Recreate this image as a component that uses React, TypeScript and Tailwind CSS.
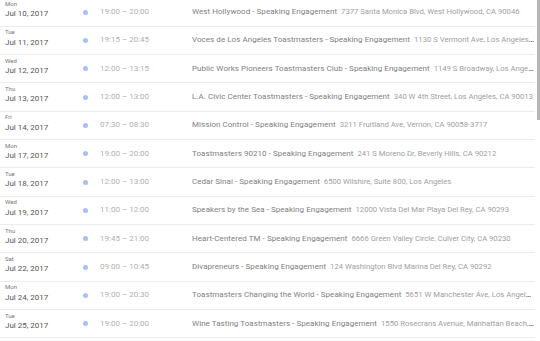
import React from "react";

const rows = [
  ["Mon", "Jul 10, 2017", "19:00 – 20:00", "West Hollywood - Speaking Engagement", "7377 Santa Monica Blvd, West Hollywood, CA 90046"],
  ["Tue", "Jul 11, 2017", "19:15 – 20:45", "Voces de Los Angeles Toastmasters - Speaking Engagement", "1130 S Vermont Ave, Los Angeles, CA 90006"],
  ["Wed", "Jul 12, 2017", "12:00 – 13:15", "Public Works Pioneers Toastmasters Club - Speaking Engagement", "1149 S Broadway, Los Angeles, CA 90015"],
  ["Thu", "Jul 13, 2017", "12:00 – 13:00", "L.A. Civic Center Toastmasters - Speaking Engagement", "340 W 4th Street, Los Angeles, CA 90013"],
  ["Fri", "Jul 14, 2017", "07:30 – 08:30", "Mission Control - Speaking Engagement", "3211 Fruitland Ave, Vernon, CA 90058-3717"],
  ["Mon", "Jul 17, 2017", "19:00 – 20:00", "Toastmasters 90210 - Speaking Engagement", "241 S Moreno Dr, Beverly Hills, CA 90212"],
  ["Tue", "Jul 18, 2017", "12:00 – 13:00", "Cedar Sinai - Speaking Engagement", "6500 Wilshire, Suite 800, Los Angeles"],
  ["Wed", "Jul 19, 2017", "11:00 – 12:00", "Speakers by the Sea - Speaking Engagement", "12000 Vista Del Mar Playa Del Rey, CA 90293"],
  ["Thu", "Jul 20, 2017", "19:45 – 21:00", "Heart-Centered TM - Speaking Engagement", "6666 Green Valley Circle, Culver City, CA 90230"],
  ["Sat", "Jul 22, 2017", "09:00 – 10:45", "Divapreneurs - Speaking Engagement", "124 Washington Blvd Marina Del Rey, CA 90292"],
  ["Mon", "Jul 24, 2017", "19:00 – 20:30", "Toastmasters Changing the World - Speaking Engagement", "5651 W Manchester Ave, Los Angeles, CA 90045"],
  ["Tue", "Jul 25, 2017", "19:00 – 20:00", "Wine Tasting Toastmasters - Speaking Engagement", "1550 Rosecrans Avenue, Manhattan Beach, CA 90266"],
];

export default function App() {
  return (
    <div
      className="relative w-[540px] h-[341px] overflow-hidden bg-white"
      style={{ fontFamily: "Roboto, 'Liberation Sans', sans-serif" }}
    >
      <div className="mt-[-1.6px] w-[535px]">
        {rows.map(([day, date, time, title, addr], i) => (
          <div key={i} className="flex h-[28.33px] items-center border-b border-[#ebebeb]">
            <div className="flex w-[83px] shrink-0 flex-col self-start pl-[5px] pt-[1.5px]">
              <div className="text-[6px] leading-[7px] text-[#777]">{day}</div>
              <div className="mt-[2.5px] text-[8px] leading-[10px] text-[#555]">{date}</div>
            </div>
            <div className="h-[5px] w-[5px] shrink-0 rounded-full bg-[#a8c0f5]" />
            <div className="ml-[12px] w-[92px] shrink-0 text-[8px] leading-[10px] text-[#b0b0b0]">{time}</div>
            <div className="min-w-0 flex-1 truncate text-[8px] leading-[10px]">
              <span className="tracking-[0.05px] text-[#808080]">{title}</span>
              <span className="ml-[4px] text-[7.7px] text-[#a0a0a0]">{addr}</span>
            </div>
          </div>
        ))}
      </div>
      <div className="absolute right-0 top-0 h-[120px] w-[3px] bg-[#b5b5b5]" />
    </div>
  );
}
